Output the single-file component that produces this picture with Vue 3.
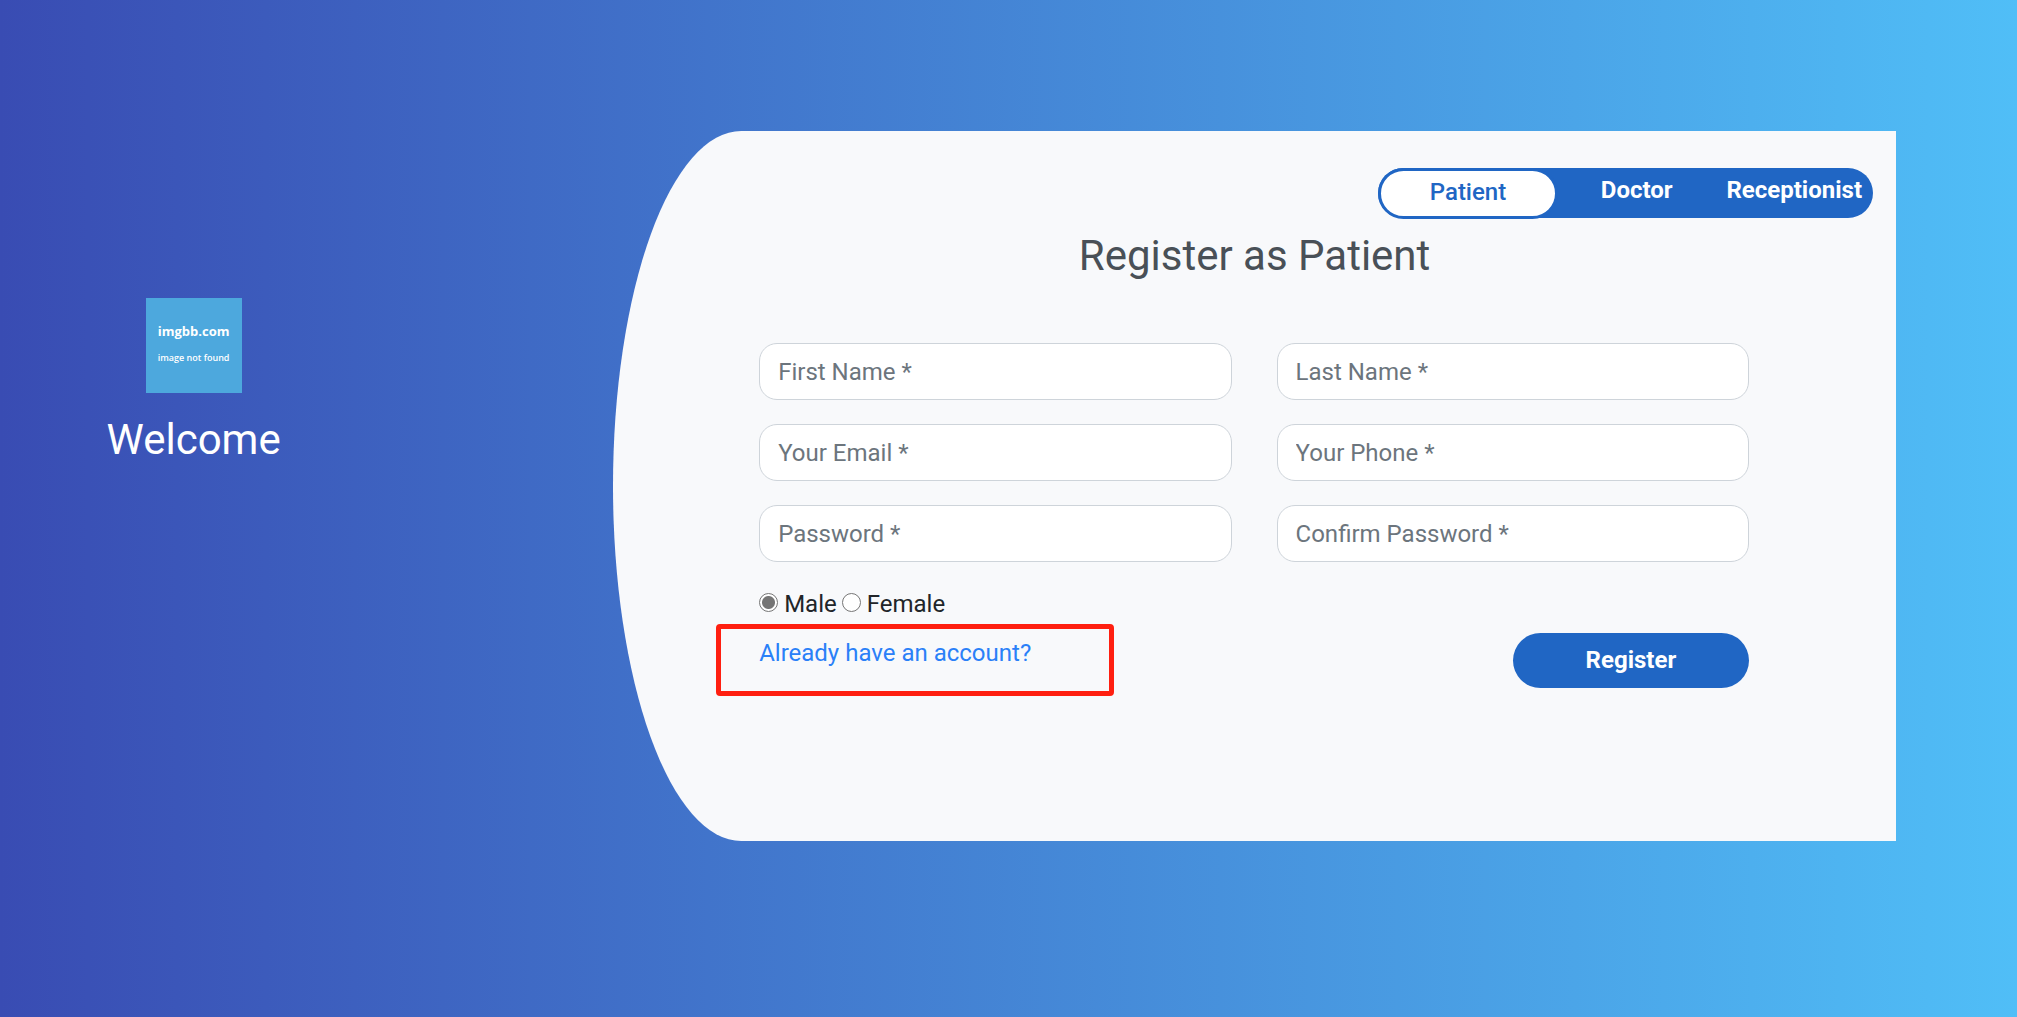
<script setup>
import { ref, reactive } from 'vue'

const roles = ['Patient', 'Doctor', 'Receptionist']
const active = ref('Patient')
const gender = ref('male')

const fields = [
  { name: 'fname', type: 'text', label: 'First Name *' },
  { name: 'lname', type: 'text', label: 'Last Name *' },
  { name: 'email', type: 'email', label: 'Your Email *' },
  { name: 'phone', type: 'tel', label: 'Your Phone *' },
  { name: 'password', type: 'password', label: 'Password *' },
  { name: 'cpassword', type: 'password', label: 'Confirm Password *' }
]
const form = reactive({ fname: '', lname: '', email: '', phone: '', password: '', cpassword: '' })
</script>

<template>
  <main class="register">
    <aside class="intro">
      <div class="logo">
        <strong>imgbb.com</strong>
        <small>image not found</small>
      </div>
      <h2>Welcome</h2>
    </aside>

    <section class="card">
      <nav class="tabs" aria-label="Account type">
        <button
          v-for="role in roles"
          :key="role"
          type="button"
          :class="{ active: active === role }"
          @click="active = role"
        >{{ role }}</button>
      </nav>

      <h1>Register as {{ active }}</h1>

      <form class="form" @submit.prevent>
        <input
          v-for="f in fields"
          :key="f.name"
          v-model="form[f.name]"
          class="field"
          :type="f.type"
          :name="f.name"
          :placeholder="f.label"
          :aria-label="f.label"
        />

        <div class="gender">
          <label><input v-model="gender" type="radio" name="gender" value="male" />Male</label>
          <label><input v-model="gender" type="radio" name="gender" value="female" />Female</label>
        </div>

        <div class="login"><a href="#login">Already have an account?</a></div>
        <button class="submit" type="submit">Register</button>
      </form>
    </section>
  </main>
</template>

<style>
body {
  margin: 0;
}
</style>

<style scoped>
.register {
  box-sizing: border-box;
  display: flex;
  align-items: flex-start;
  min-height: 100vh;
  padding: 131px 0 60px;
  background: linear-gradient(to right, #394cb3, #50bef7);
  color: #212529;
  font-family: Roboto, "Liberation Sans", sans-serif;
  font-size: 24px;
  line-height: 36px;
}

h1,
h2 {
  margin: 0;
  font-size: 42px;
  font-weight: 400;
  line-height: 50px;
  text-align: center;
}

.intro {
  flex: 0 0 19.2%;
  display: flex;
  flex-direction: column;
  align-items: center;
  gap: 22px;
  padding-top: 167px;
  color: #fff;
}

.logo {
  box-sizing: border-box;
  display: flex;
  flex-direction: column;
  align-items: center;
  gap: 9px;
  width: 96px;
  height: 95px;
  padding-top: 23px;
  background: #4da8dd;
  font-family: "Open Sans", "Noto Sans", sans-serif;
  font-weight: 600;
  white-space: nowrap;
}

.logo strong {
  font-size: 13px;
  font-weight: 700;
  line-height: 20px;
}

.logo small {
  font-size: 9px;
  line-height: 16px;
}

.card {
  box-sizing: border-box;
  flex: 1;
  margin: 0 6% 0 11.2%;
  padding: 37px 0 153px;
  background: #f8f9fb;
  border-radius: 10% 0 0 10% / 50% 0 0 50%;
}

.tabs {
  display: grid;
  grid-template-columns: 180px 1fr 1fr;
  width: 495px;
  height: 50px;
  margin: 0 23px 0 auto;
  background: #2066c4;
  border-radius: 25px;
}

button {
  border: 0;
  background: #2066c4;
  color: #fff;
  font: inherit;
  font-weight: 700;
  cursor: pointer;
}

.tabs button {
  height: 44px;
  padding: 0;
  background: none;
}

.tabs .active {
  height: 51px;
  padding-bottom: 3px;
  border: 3px solid #2066c4;
  border-radius: 26px;
  background: #fff;
  color: #2066c4;
  font-weight: 500;
}

h1 {
  margin-top: 13px;
  color: #495057;
}

.form {
  display: grid;
  grid-template-columns: 1fr 1fr;
  gap: 24px 45px;
  margin: 62px 147px 0 146px;
}

.field {
  box-sizing: border-box;
  width: 100%;
  height: 57px;
  padding: 0 18px;
  border: 1px solid #ced4da;
  border-radius: 18px;
  background: #fff;
  color: #495057;
  font: inherit;
}

.field::placeholder {
  color: #6c757d;
  opacity: 1;
}

.gender {
  grid-column: 1 / -1;
  display: flex;
  gap: 5px;
  margin-bottom: -13px;
}

.gender label {
  display: flex;
  align-items: center;
  gap: 6px;
}

.gender input {
  appearance: none;
  box-sizing: border-box;
  width: 19px;
  height: 19px;
  margin: 0 0 4px;
  border: 1px solid #767676;
  border-radius: 50%;
  background: #fff;
}

.gender input:checked {
  background: radial-gradient(circle, #757575 6px, #fff 7px);
}

.login {
  position: relative;
  padding-top: 2px;
}

.login::after {
  content: "";
  position: absolute;
  top: -9px;
  left: -43px;
  box-sizing: border-box;
  width: 398px;
  height: 72px;
  border: 5px solid #ff1f10;
  border-radius: 4px;
  pointer-events: none;
}

a {
  color: #2a80f8;
  text-decoration: none;
}

.submit {
  justify-self: end;
  width: 50%;
  height: 55px;
  padding-bottom: 2px;
  border-radius: 28px;
}
</style>
